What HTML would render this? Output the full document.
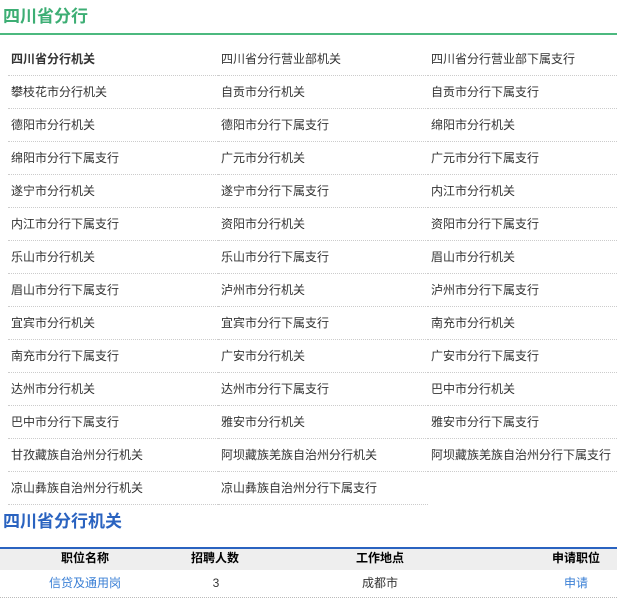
<!DOCTYPE html>
<html><head><meta charset="utf-8"><style>
*{margin:0;padding:0;box-sizing:border-box}
body{width:617px;height:603px;overflow:hidden;background:#fff;font-family:"Liberation Sans","Noto Sans CJK SC",sans-serif;color:#333;position:relative}
.t1{position:absolute;left:3px;top:6px;font-size:17px;font-weight:bold;color:#3dae74;line-height:22px}
.g{position:absolute;left:0;top:33px;width:617px;height:2px;background:#4cb97f}
.grid{position:absolute;left:8px;top:43px;width:609px;display:flex;flex-wrap:wrap}
.c{width:210px;height:33px;line-height:33px;border-bottom:1px dotted #ccc;font-size:12px;padding-left:3px;white-space:nowrap}
.c:nth-child(3n){width:189px}
.b{font-weight:bold}
.t2{position:absolute;left:3px;top:511px;font-size:17px;font-weight:bold;color:#2a63c0;line-height:22px}
.bl{position:absolute;left:0;top:547px;width:617px;height:2px;background:#2a63c0}
.hd{position:absolute;left:0;top:549px;width:617px;height:21px;background:#eee}
.s{position:absolute;font-size:12px;line-height:14px;transform:translateX(-50%);white-space:nowrap}
.h{font-weight:bold;color:#000;top:551px}
.d{top:576px}
.ln{color:#3a7fd5}
.dl{position:absolute;left:0;top:597px;width:617px;border-bottom:1px dotted #bbb}
</style></head><body>
<div class="t1">四川省分行</div><div class="g"></div>
<div class="grid">
<div class="c b">四川省分行机关</div><div class="c">四川省分行营业部机关</div><div class="c">四川省分行营业部下属支行</div>
<div class="c">攀枝花市分行机关</div><div class="c">自贡市分行机关</div><div class="c">自贡市分行下属支行</div>
<div class="c">德阳市分行机关</div><div class="c">德阳市分行下属支行</div><div class="c">绵阳市分行机关</div>
<div class="c">绵阳市分行下属支行</div><div class="c">广元市分行机关</div><div class="c">广元市分行下属支行</div>
<div class="c">遂宁市分行机关</div><div class="c">遂宁市分行下属支行</div><div class="c">内江市分行机关</div>
<div class="c">内江市分行下属支行</div><div class="c">资阳市分行机关</div><div class="c">资阳市分行下属支行</div>
<div class="c">乐山市分行机关</div><div class="c">乐山市分行下属支行</div><div class="c">眉山市分行机关</div>
<div class="c">眉山市分行下属支行</div><div class="c">泸州市分行机关</div><div class="c">泸州市分行下属支行</div>
<div class="c">宜宾市分行机关</div><div class="c">宜宾市分行下属支行</div><div class="c">南充市分行机关</div>
<div class="c">南充市分行下属支行</div><div class="c">广安市分行机关</div><div class="c">广安市分行下属支行</div>
<div class="c">达州市分行机关</div><div class="c">达州市分行下属支行</div><div class="c">巴中市分行机关</div>
<div class="c">巴中市分行下属支行</div><div class="c">雅安市分行机关</div><div class="c">雅安市分行下属支行</div>
<div class="c">甘孜藏族自治州分行机关</div><div class="c">阿坝藏族羌族自治州分行机关</div><div class="c">阿坝藏族羌族自治州分行下属支行</div>
<div class="c">凉山彝族自治州分行机关</div><div class="c">凉山彝族自治州分行下属支行</div>
</div>
<div class="t2">四川省分行机关</div><div class="bl"></div><div class="hd"></div>
<div class="s h" style="left:85px">职位名称</div>
<div class="s h" style="left:215px">招聘人数</div>
<div class="s h" style="left:380px">工作地点</div>
<div class="s h" style="left:576px">申请职位</div>
<div class="s d ln" style="left:85px">信贷及通用岗</div>
<div class="s d" style="left:216px">3</div>
<div class="s d" style="left:380px">成都市</div>
<div class="s d ln" style="left:576px">申请</div>
<div class="dl"></div>
</body></html>
